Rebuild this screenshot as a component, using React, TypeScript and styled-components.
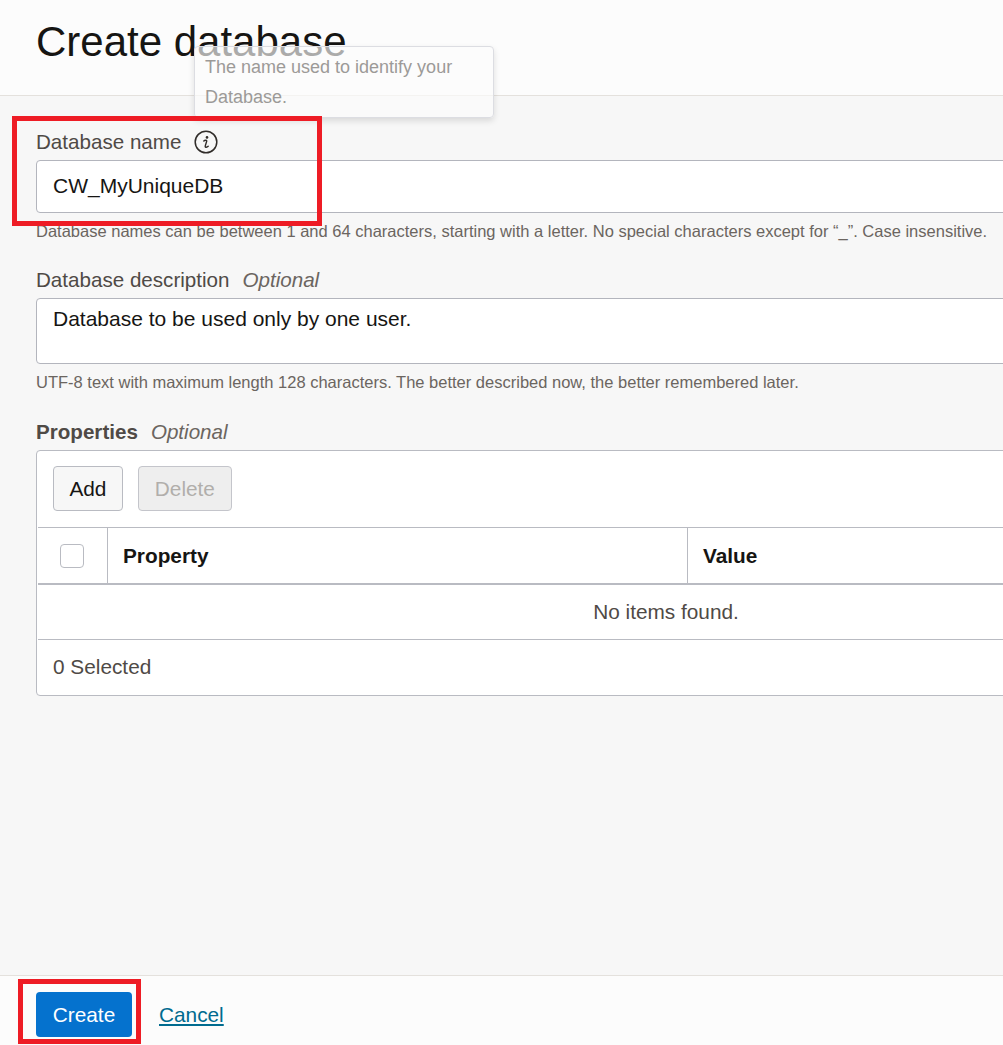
import styled, { createGlobalStyle } from "styled-components";

const GlobalStyle = createGlobalStyle`
  html, body {
    margin: 0;
    padding: 0;
    height: 100%;
    overflow: hidden;
    background: #f7f7f7;
    font-family: "Liberation Sans", Arial, sans-serif;
    color: #161513;
  }
`;

export default function App() {
  return (
    <Page>
      <GlobalStyle />
      <Header>
        <Title>Create database</Title>
      </Header>
      <Main>
        <Field>
          <Label>
            Database name
            <InfoIcon viewBox="0 0 24 24" aria-hidden="true">
              <circle cx="12" cy="12" r="10.8" fill="none" stroke="#312d2a" strokeWidth="1.5" />
              <circle cx="13" cy="7.4" r="1.3" fill="#312d2a" />
              <path d="M9.8 11.1c.9-.9 2.9-1.3 2.9 0 0 1-1.5 4.2-1.5 5.4 0 1.2 1.9.9 3-.3" fill="none" stroke="#312d2a" strokeWidth="1.4" strokeLinecap="round" />
            </InfoIcon>
          </Label>
          <Input>CW_MyUniqueDB</Input>
          <Help>Database names can be between 1 and 64 characters, starting with a letter. No special characters except for “_”. Case insensitive.</Help>
        </Field>
        <Field>
          <Label>
            Database description
            <Optional>Optional</Optional>
          </Label>
          <TextArea>Database to be used only by one user.</TextArea>
          <Help>UTF-8 text with maximum length 128 characters. The better described now, the better remembered later.</Help>
        </Field>
        <Field>
          <Label>
            <strong>Properties</strong>
            <Optional>Optional</Optional>
          </Label>
          <Panel>
            <Toolbar>
              <ToolButton>Add</ToolButton>
              <ToolButton disabled>Delete</ToolButton>
            </Toolbar>
            <HeadRow>
              <CheckCell>
                <Check />
              </CheckCell>
              <PropertyCell>Property</PropertyCell>
              <ValueCell>Value</ValueCell>
            </HeadRow>
            <EmptyRow>No items found.</EmptyRow>
            <PanelFooter>0 Selected</PanelFooter>
          </Panel>
        </Field>
      </Main>
      <Footer>
        <PrimaryButton>Create</PrimaryButton>
        <CancelLink href="#">Cancel</CancelLink>
      </Footer>
      <Tooltip>
        The name used to identify your
        <br />
        Database.
      </Tooltip>
      <Highlight $left={12} $top={116} $width={310} $height={110} />
      <Highlight $left={18} $top={979} $width={123} $height={65} />
    </Page>
  );
}

const Page = styled.div`
  position: relative;
  display: flex;
  flex-direction: column;
  width: 1003px;
  height: 1045px;
  overflow: hidden;
`;

const Header = styled.header`
  flex: none;
  height: 96px;
  box-sizing: border-box;
  padding-left: 36px;
  background: #fcfcfc;
  border-bottom: 1px solid #e4e1dd;
`;

const Title = styled.h1`
  margin: 0;
  padding-top: 19px;
  font-size: 42px;
  line-height: 46px;
  font-weight: 400;
  color: #161513;
`;

const Main = styled.main`
  flex: 1;
  width: 1259px;
  padding: 34px 0 0 36px;
`;

const Field = styled.div`
  display: flex;
  flex-direction: column;
  margin-bottom: 28px;

  &:first-child {
    margin-bottom: 27px;
  }
`;

const Label = styled.label`
  display: flex;
  align-items: center;
  gap: 13px;
  height: 24px;
  margin-bottom: 6px;
  font-size: 20.6px;
  color: #4f4a46;
  white-space: pre;

  strong {
    font-weight: 700;
  }
`;

const Optional = styled.em`
  color: #6b6560;
  font-style: italic;
`;

const InfoIcon = styled.svg`
  width: 24px;
  height: 24px;
`;

const Input = styled.div`
  box-sizing: border-box;
  height: 53px;
  padding: 0 16px 2px;
  display: flex;
  align-items: center;
  background: #fff;
  border: 1px solid #b3b5bd;
  border-radius: 4px;
  font-size: 21px;
  color: #161513;
`;

const TextArea = styled(Input)`
  height: 66px;
  align-items: flex-start;
  padding-top: 8px;
`;

const Help = styled.div`
  margin-top: 8px;
  font-size: 16.5px;
  line-height: 20px;
  color: #6b6560;
  white-space: nowrap;
`;

const Panel = styled.div`
  box-sizing: border-box;
  height: 246px;
  background: #fff;
  border: 1px solid #b9bbc2;
  border-radius: 4px;
`;

const Toolbar = styled.div`
  display: flex;
  gap: 15px;
  height: 76px;
  box-sizing: border-box;
  padding: 15px 16px 0;
`;

const ToolButton = styled.button`
  height: 45px;
  padding: 1px ${(p) => (p.disabled ? "16px" : "15.4px")} 0;
  border: 1px solid ${(p) => (p.disabled ? "#c4c5cb" : "#b9bbc2")};
  border-radius: 4px;
  background: ${(p) => (p.disabled ? "#eeeeee" : "#f7f7f7")};
  color: ${(p) => (p.disabled ? "#b1aeab" : "#161513")};
  font-family: inherit;
  font-size: 20.8px;
`;

const HeadRow = styled.div`
  display: flex;
  height: 58px;
  margin-left: 1px;
  box-sizing: border-box;
  border-top: 1px solid #b9bbc2;
  border-bottom: 2px solid #b9bbc2;
  font-size: 20.8px;
  font-weight: 700;
`;

const CheckCell = styled.div`
  flex: none;
  display: flex;
  align-items: center;
  width: 69px;
  padding-left: 22px;
  box-sizing: border-box;
`;

const Check = styled.span`
  box-sizing: border-box;
  display: block;
  width: 24px;
  height: 24px;
  border: 1px solid #b9bbc2;
  border-radius: 4px;
  background: #fff;
`;

const PropertyCell = styled.div`
  flex: none;
  display: flex;
  align-items: center;
  width: 580px;
  box-sizing: border-box;
  padding-left: 15px;
  border-left: 1px solid #b9bbc2;
`;

const ValueCell = styled(PropertyCell)`
  flex: 1;
  width: auto;
`;

const EmptyRow = styled.div`
  display: flex;
  align-items: center;
  justify-content: center;
  height: 55px;
  margin-left: 1px;
  box-sizing: border-box;
  border-bottom: 1px solid #b9bbc2;
  font-size: 20.8px;
  color: #4f4a46;
`;

const PanelFooter = styled.div`
  display: flex;
  align-items: center;
  height: 55px;
  box-sizing: border-box;
  padding: 0 0 2px 16px;
  font-size: 20.8px;
  color: #4f4a46;
`;

const Footer = styled.footer`
  flex: none;
  display: flex;
  align-items: center;
  gap: 27px;
  height: 70px;
  box-sizing: border-box;
  padding: 7px 0 0 36px;
  background: #fcfcfc;
  border-top: 1px solid #e4e1dd;
`;

const PrimaryButton = styled.button`
  width: 96px;
  height: 45px;
  padding: 1px 0 0;
  border: none;
  border-radius: 4px;
  background: #0572ce;
  color: #fff;
  font-family: inherit;
  font-size: 20.8px;
`;

const CancelLink = styled.a`
  padding-top: 1px;
  font-size: 20.8px;
  color: #006b8f;
  text-decoration: underline;
`;

const Tooltip = styled.div`
  position: absolute;
  left: 194px;
  top: 46px;
  box-sizing: border-box;
  width: 300px;
  height: 72px;
  padding: 5px 10px;
  background: rgba(252, 252, 252, 0.65);
  border: 1px solid #dcdde2;
  border-radius: 4px;
  box-shadow: 0 3px 6px rgba(0, 0, 0, 0.12);
  font-size: 18px;
  line-height: 30px;
  color: #9c9a98;
`;

const Highlight = styled.div<{ $left: number; $top: number; $width: number; $height: number }>`
  position: absolute;
  left: ${(p) => p.$left}px;
  top: ${(p) => p.$top}px;
  width: ${(p) => p.$width}px;
  height: ${(p) => p.$height}px;
  box-sizing: border-box;
  border: 5px solid #ee1c25;
`;
